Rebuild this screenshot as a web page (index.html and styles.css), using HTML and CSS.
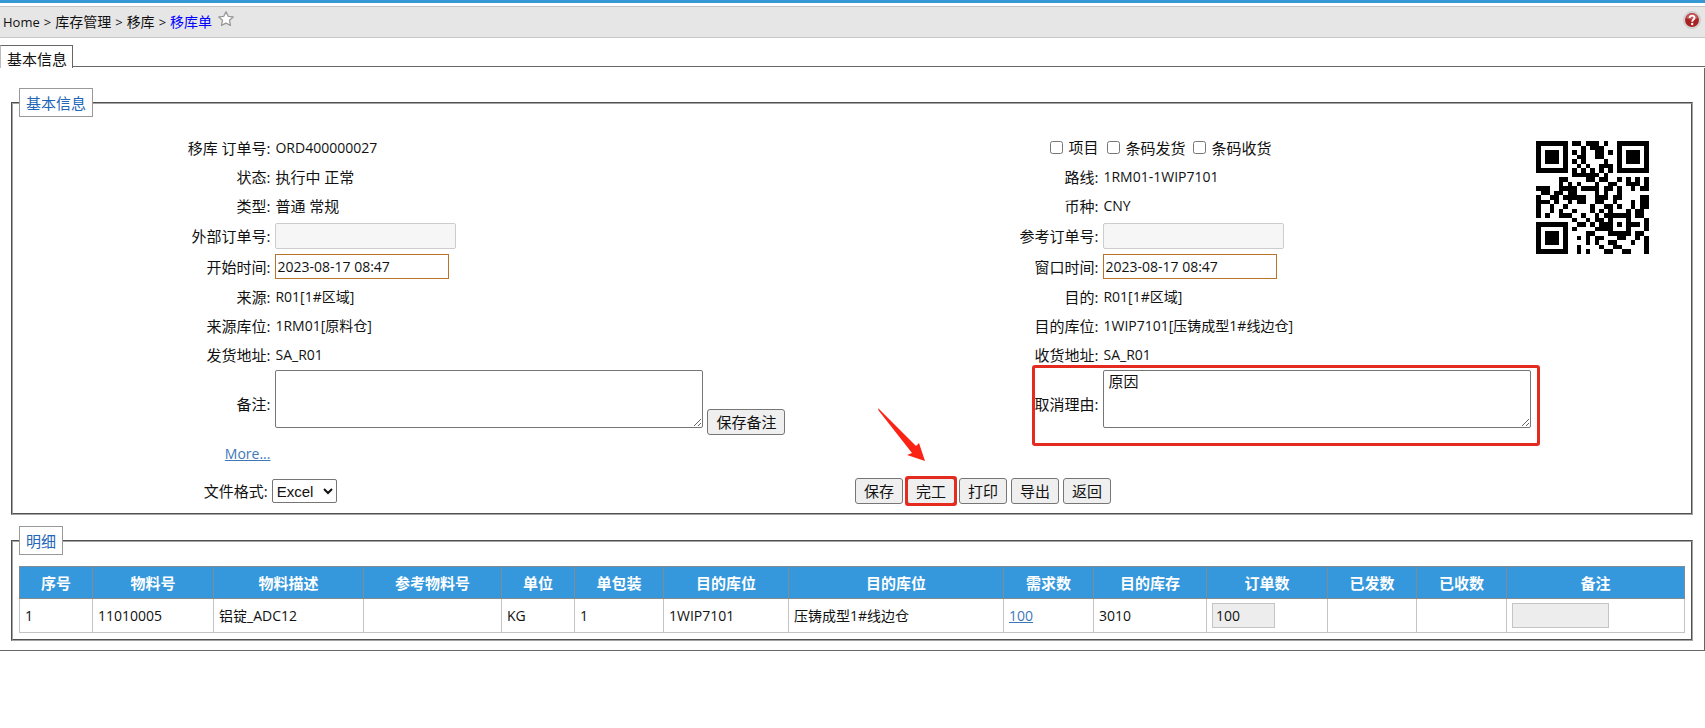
FILE: index.html
```
<!DOCTYPE html>
<html lang="zh-CN">
<head>
<meta charset="utf-8">
<title>移库单</title>
<link rel="stylesheet" href="styles.css">
</head>
<body>
<header class="topbar">
  <nav class="crumbs">
    <span>Home</span><span>&gt;</span><span class="cn">库存管理</span><span>&gt;</span><span class="cn">移库</span><span>&gt;</span><a class="cn current" href="#">移库单</a>
    <svg class="star" viewBox="0 0 16 16" width="16" height="16" aria-hidden="true"><path d="M8 .8l2.200 4.500 5 .6-3.700 3.400 1 5.100L8 12.100l-4.500 2.300 1-5.100L.8 5.900l5-.6z" fill="#fff" stroke="#999" stroke-width="1.300" stroke-linejoin="round"/></svg>
  </nav>
  <svg class="help" viewBox="0 0 18 18" width="18" height="18" aria-label="帮助"><circle cx="9" cy="9" r="8.500" fill="#d8d8d8" stroke="#bbb" stroke-width=".6"/><circle cx="9" cy="9" r="7" fill="#a92323"/><path d="M3 7a6.300 6.300 0 0 1 12 0c-4 2-8 2-12 0z" fill="#c65a5a"/><path d="M6.600 6.900C6.600 3.800 11.700 4 11.500 6.900c-.1 1.600-2.300 1.700-2.300 3.800" fill="none" stroke="#fff" stroke-width="1.900"/><circle cx="9.200" cy="13" r="1.200" fill="#fff"/></svg>
</header>

<div class="tabs"><a class="tab" href="#">基本信息</a><div class="tab-line"></div></div>

<main class="panel">
  <fieldset class="group">
    <legend>基本信息</legend>
    <div class="form">
      <div class="stack">
        <div class="field"><span class="label">移库 订单号:</span><span class="latin">ORD400000027</span></div>
        <div class="field"><span class="label">状态:</span><span>执行中 正常</span></div>
        <div class="field"><span class="label">类型:</span><span>普通 常规</span></div>
        <div class="field tall"><label class="label" for="ext">外部订单号:</label><span class="cell"><input class="text" id="ext" type="text" disabled></span></div>
        <div class="field tall"><label class="label" for="start">开始时间:</label><span class="cell"><input class="date" id="start" type="text" value="2023-08-17 08:47"></span></div>
        <div class="field"><span class="label">来源:</span><span class="latin">R01[1#区域]</span></div>
        <div class="field"><span class="label">来源库位:</span><span class="latin">1RM01[原料仓]</span></div>
        <div class="field"><span class="label">发货地址:</span><span class="latin">SA_R01</span></div>
        <div class="field area"><label class="label" for="note">备注:</label><span class="cell note"><textarea id="note"></textarea><button type="button">保存备注</button></span></div>
        <div class="field more"><a class="label link latin" href="#">More...</a></div>
      </div>
      <div class="side">
        <div class="stack">
          <div class="field checks"><span class="label"><label class="check"><input type="checkbox">项目</label></span><span class="cell"><label class="check"><input type="checkbox">条码发货</label><label class="check"><input type="checkbox">条码收货</label></span></div>
          <div class="field"><span class="label">路线:</span><span class="latin">1RM01-1WIP7101</span></div>
          <div class="field"><span class="label">币种:</span><span class="latin">CNY</span></div>
          <div class="field tall"><label class="label" for="ref">参考订单号:</label><span class="cell"><input class="text" id="ref" type="text" disabled></span></div>
          <div class="field tall"><label class="label" for="window">窗口时间:</label><span class="cell"><input class="date" id="window" type="text" value="2023-08-17 08:47"></span></div>
          <div class="field"><span class="label">目的:</span><span class="latin">R01[1#区域]</span></div>
          <div class="field"><span class="label">目的库位:</span><span class="latin">1WIP7101[压铸成型1#线边仓]</span></div>
          <div class="field"><span class="label">收货地址:</span><span class="latin">SA_R01</span></div>
          <div class="field area marked"><label class="label" for="reason">取消理由:</label><span class="cell"><textarea id="reason">原因</textarea></span></div>
        </div>
        <svg class="qr" id="qr" viewBox="0 0 25 25" shape-rendering="crispEdges" role="img" aria-label="ORD400000027"></svg>
      </div>
    </div>
    <div class="footer">
      <div class="format"><label class="label" for="fmt">文件格式:</label><select id="fmt"><option>Excel</option></select></div>
      <div class="actions">
        <button type="button">保存</button><button type="button" class="finish">完工</button><button type="button">打印</button><button type="button">导出</button><button type="button">返回</button>
        <svg class="arrow" viewBox="0 0 50 54" width="50" height="54" aria-hidden="true"><path d="M1 1Q1 0 2 1L39 38L42 35L48 53L30 47L35 45L2 3Z" fill="#fb2414"/></svg>
      </div>
    </div>
  </fieldset>

  <fieldset class="group detail">
    <legend>明细</legend>
    <table>
      <colgroup><col class="w73"><col class="w121"><col class="w150"><col class="w138"><col class="w73"><col class="w89"><col class="w125"><col class="w215"><col class="w90"><col class="w113"><col class="w121"><col class="w89"><col class="w90"><col class="w178"></colgroup>
      <thead><tr><th>序号</th><th>物料号</th><th>物料描述</th><th>参考物料号</th><th>单位</th><th>单包装</th><th>目的库位</th><th>目的库位</th><th>需求数</th><th>目的库存</th><th>订单数</th><th>已发数</th><th>已收数</th><th>备注</th></tr></thead>
      <tbody><tr><td>1</td><td>11010005</td><td>铝锭_ADC12</td><td></td><td>KG</td><td>1</td><td>1WIP7101</td><td>压铸成型1#线边仓</td><td><a class="link" href="#">100</a></td><td>3010</td><td><input class="qty" type="text" value="100" disabled aria-label="订单数"></td><td></td><td></td><td><input class="remark" type="text" disabled aria-label="备注"></td></tr></tbody>
    </table>
  </fieldset>
</main>
<script src="qr.js"></script>
</body>
</html>
```
FILE: styles.css
```
* { box-sizing: border-box; }
body {
  margin: 0;
  background: #fff;
  color: #111;
  font: 15px/20px "Open Sans", "Noto Sans CJK SC", sans-serif;
}
button, input, textarea { font: inherit; color: inherit; margin: 0; }

.topbar {
  display: flex;
  justify-content: space-between;
  align-items: center;
  height: 38px;
  padding: 0 4px 0 3px;
  border-top: 3px solid #3797d3;
  background: linear-gradient(#fff 3px, #c4c4c4 3px, #c4c4c4 4px, #e6e6e6 4px);
  border-bottom: 1px solid #c8c8c8;
}
.crumbs { display: flex; align-items: center; gap: 4px; font-size: 13px; padding-top: 4px; }
.cn { font-size: 14px; }
.current { color: #00f; text-decoration: none; }
.star { margin: 0 0 6px 2px; }

.tabs { display: flex; align-items: flex-start; margin-top: 7px; }
.tab {
  height: 23px;
  padding: 3px 5px 0 6px;
  border: 1px solid #666;
  border-left-color: #bbb;
  border-bottom: 0;
  color: #111;
  text-decoration: none;
}
.tab-line { flex: 1; height: 22px; border-bottom: 1px solid #666; }
.panel { padding: 20px 11px 9px; border-right: 1px solid #666; border-bottom: 1px solid #666; }

.group {
  min-width: 0;
  margin: 0 0 11px;
  padding: 16px 6px 0;
  border: 2px groove #a4a4a4;
}
.detail { margin: 0; padding: 11px 6px 6px; }
legend { padding: 4px 6px 3px; border: 1px solid #999; color: #2266b8; }

.form { display: grid; grid-template-columns: 1fr 1fr; padding-right: 10px; }
.side { display: grid; }
.side > * { grid-area: 1 / 1; }
.qr { justify-self: end; width: 113px; height: 113px; margin: 8px 26px 0 0; }
.field { display: grid; grid-template-columns: 11fr 25fr; column-gap: 5px; align-items: center; min-height: 29px; }
.label { text-align: right; }
.tall { min-height: 31px; }
.area { min-height: 70px; }
.more { min-height: 30px; }
.latin { font-size: 14px; }
.cell { display: flex; align-items: center; }
.check { display: inline-flex; align-items: center; gap: 5px; }
.checks .cell { gap: 8px; padding-left: 4px; }
.check input { width: 13px; height: 13px; }
.text { width: 181px; height: 26px; border: 1px solid #ccc; border-radius: 2px; background: #f6f6f6; }
.date { width: 174px; height: 25px; padding: 1px; border: 1px solid #b8742a; font-size: 14px; background: #fff; }
textarea { width: 428px; height: 58px; padding: 0 4px; border: 1px solid #767676; border-radius: 2px; background: #fff; display: block; }
.area .cell { padding-bottom: 10px; }
.note { gap: 4px; align-items: flex-end; }
.note button { margin-bottom: -7px; }
.link { color: #3f78b8; text-decoration: underline; }

button { height: 26px; padding: 0 8px; border: 1px solid #767676; border-radius: 3px; background: #efefef; white-space: nowrap; }

.marked { position: relative; }
.marked::after {
  content: "";
  position: absolute;
  inset: -4px 135px -7px 185px;
  border: 3px solid #e52b20;
  border-radius: 3px;
  pointer-events: none;
}

.footer { display: grid; grid-template-columns: 1fr 1fr; padding: 9px 0; }
.format { display: grid; grid-template-columns: 3fr 7fr; column-gap: 4px; align-items: center; }
select { justify-self: start; width: 65px; height: 24px; padding: 0; border: 1px solid #767676; border-radius: 2px; background: #fff; color: #111; font: 15px/20px "Liberation Sans", sans-serif; }
.actions { position: relative; display: flex; gap: 4px; padding-left: 3px; }
.finish { position: relative; }
.finish::after { content: ""; position: absolute; inset: -3px; border: 3px solid #e52b20; border-radius: 3px; }
.arrow { position: absolute; left: 25px; top: -70px; }

table { width: 100%; table-layout: fixed; border-collapse: collapse; }
th { height: 32px; padding: 0; border: 1px solid #808c94; background: #3598dc; color: #fff; font-weight: 700; }
td { height: 34px; padding: 0 5px; border: 1px solid #c4c4c4; font-size: 14px; }
td input { display: block; height: 25px; padding: 0 3px; border: 1px solid #c4c4c4; background: #ededed; }
.qty { width: 63px; }
.remark { width: 97px; }
.w73 { width: 73px; }
.w89 { width: 89px; }
.w90 { width: 90px; }
.w113 { width: 113px; }
.w121 { width: 121px; }
.w125 { width: 125px; }
.w138 { width: 138px; }
.w150 { width: 150px; }
.w178 { width: 178px; }
.w215 { width: 215px; }
```
FILE: qr.js
```
// Draws the order number as a QR code: version 2, level H, mask 5, byte mode.
(function () {
  const SIZE = 25, DATA = 16, ECC = 28, FORMAT = "000001001010101";
  const svg = document.getElementById("qr");
  const text = svg.getAttribute("aria-label");
  const bin = (n, len) => n.toString(2).padStart(len, "0");

  let bits = "0100" + bin(text.length, 8);
  for (const ch of text) bits += bin(ch.charCodeAt(0), 8);
  bits += "0000";
  const words = bits.match(/.{8}/g).map(b => parseInt(b, 2));
  for (let p = 0; words.length < DATA; p++) words.push(p % 2 ? 17 : 236);

  const exp = [], log = [];
  for (let i = 0, x = 1; i < 255; i++) {
    exp[i] = x; log[x] = i;
    x <<= 1; if (x > 255) x ^= 285;
  }
  const mul = (a, b) => a && b ? exp[(log[a] + log[b]) % 255] : 0;
  let gen = [1];
  for (let i = 0; i < ECC; i++) {
    const next = gen.concat(0);
    gen.forEach((g, j) => { next[j + 1] ^= mul(g, exp[i]); });
    gen = next;
  }
  const rem = words.concat(new Array(ECC).fill(0));
  for (let i = 0; i < DATA; i++) {
    const f = rem[i];
    gen.forEach((g, j) => { rem[i + j] ^= mul(g, f); });
  }
  const stream = words.concat(rem.slice(DATA)).map(w => bin(w, 8)).join("") + "0000000";

  const m = Array.from({ length: SIZE }, () => new Array(SIZE).fill(null));
  const ring = (cy, cx, r, dark) => {
    for (let y = -r; y <= r; y++) for (let x = -r; x <= r; x++) {
      const row = m[cy + y];
      if (row && cx + x >= 0 && cx + x < SIZE) row[cx + x] = dark(Math.max(Math.abs(x), Math.abs(y)));
    }
  };
  [[3, 3], [3, 21], [21, 3]].forEach(([y, x]) => ring(y, x, 4, d => d !== 2 && d !== 4));
  ring(18, 18, 2, d => d !== 1);
  for (let i = 8; i < 17; i++) m[6][i] = m[i][6] = i % 2 === 0;
  const first = [[8,0],[8,1],[8,2],[8,3],[8,4],[8,5],[8,7],[8,8],[7,8],[5,8],[4,8],[3,8],[2,8],[1,8],[0,8]];
  for (let i = 0; i < 15; i++) {
    const on = FORMAT[i] === "1";
    m[first[i][0]][first[i][1]] = on;
    if (i < 7) m[24 - i][8] = on; else m[8][10 + i] = on;
  }
  m[17][8] = true;

  let k = 0, up = true;
  for (let c = SIZE - 1; c > 0; c -= 2) {
    if (c === 6) c--;
    for (let n = 0; n < SIZE; n++) {
      const y = up ? SIZE - 1 - n : n;
      for (const x of [c, c - 1]) if (m[y][x] === null) {
        m[y][x] = (stream[k++] === "1") !== ((y * x) % 2 + (y * x) % 3 === 0);
      }
    }
    up = !up;
  }

  let d = "";
  m.forEach((row, y) => row.forEach((on, x) => { if (on) d += `M${x} ${y}h1v1h-1z`; }));
  const path = document.createElementNS("http://www.w3.org/2000/svg", "path");
  path.setAttribute("d", d);
  svg.appendChild(path);
})();
```
